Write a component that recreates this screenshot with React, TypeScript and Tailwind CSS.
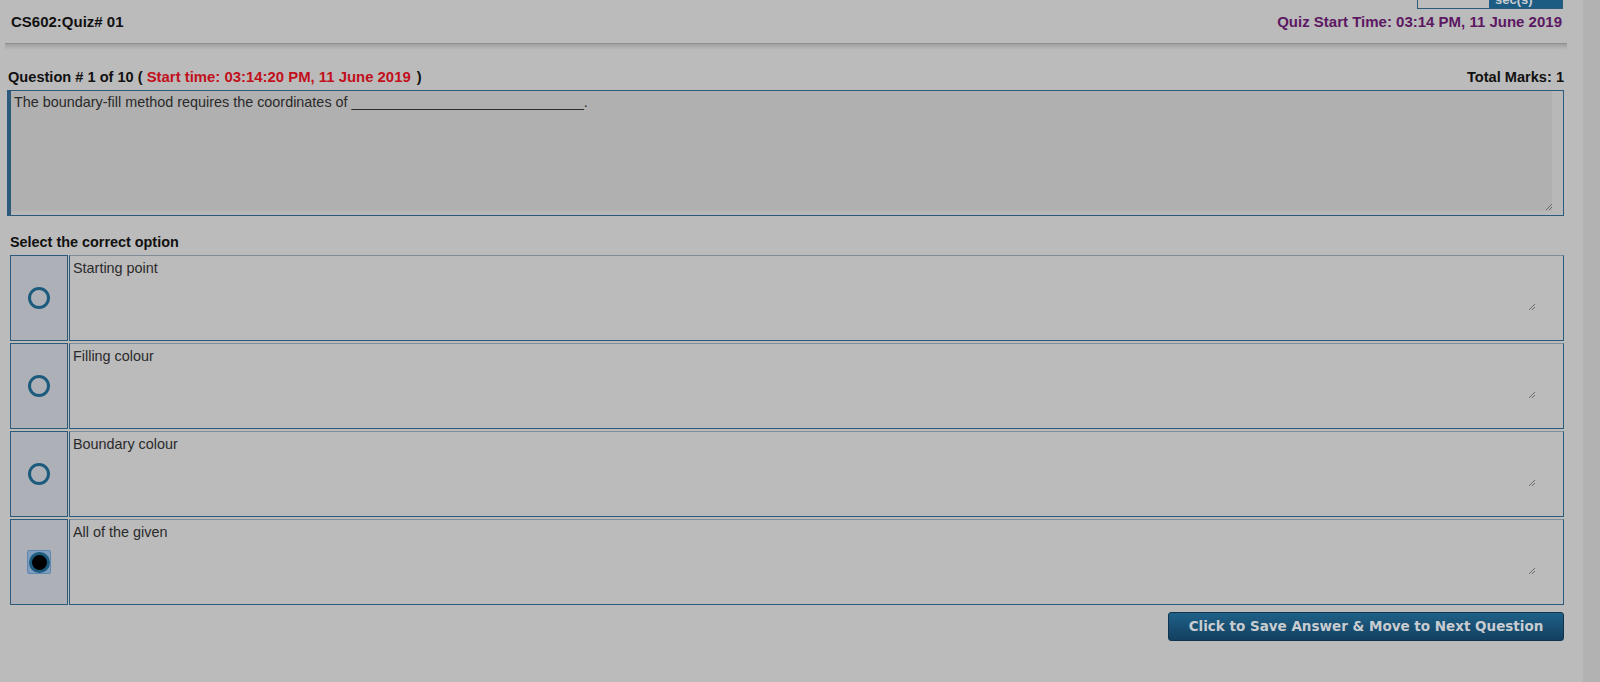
import React from "react"

const options = [
  { text: "Starting point", checked: false },
  { text: "Filling colour", checked: false },
  { text: "Boundary colour", checked: false },
  { text: "All of the given", checked: true },
]

const Grip = () => (
  <svg width="8" height="8" viewBox="0 0 8 8" className="absolute">
    <path d="M7 1 L1 7 M7 4 L4 7" stroke="#6b6b6b" strokeWidth="1" fill="none" />
  </svg>
)

const Radio = ({ checked }: { checked: boolean }) =>
  checked ? (
    <div className="flex h-[24px] w-[24px] items-center justify-center rounded-[2px] border border-[#5d87b3] bg-[#7f9cbd]">
      <div className="h-[21px] w-[21px] rounded-full border-[3px] border-[#1c5a7e] bg-black" />
    </div>
  ) : (
    <div className="h-[22px] w-[22px] rounded-full border-[3px] border-[#1c5a7e]" />
  )

export default function App() {
  return (
    <div className="flex h-[682px] w-full overflow-hidden bg-[#bbbbbb] font-['Liberation_Sans',Arial,sans-serif] text-[14.4px] leading-[17px]">
      <div className="relative w-[1583px]">
        {/* partly scrolled-off timer box */}
        <div className="absolute left-[1417px] top-0 flex h-[9px] w-[146px] overflow-hidden border border-t-0 border-[#2c5a7a]">
          <div className="w-[71px] bg-[#bdbdbd]" />
          <div className="flex-1 bg-[#1d5c82] pl-[6px] text-[13px] font-bold leading-[15px] text-[#c9cdd2] -mt-[8px]">
            sec(s)
          </div>
        </div>

        <div className="flex items-start justify-between pl-[11px] pr-[21px] pt-[13px] text-[15px] font-bold">
          <span className="text-[#111]">CS602:Quiz# 01</span>
          <span className="text-[#5c1862]">Quiz Start Time: 03:14 PM, 11 June 2019</span>
        </div>

        <div className="ml-[5px] mt-[13px] w-[1562px]">
          <div className="h-[1px] bg-[#8f8f8f]" />
          <div className="h-[6px] bg-gradient-to-b from-[#a0a0a0] to-[#bbbbbb]" />
        </div>

        <div className="ml-[7px] w-[1557px]">
          <div className="mt-[19px] flex justify-between text-[14.6px] font-bold text-[#111]">
            <span className="pl-[1px]">
              Question # 1 of 10 ({" "}
              <span className="text-[14.9px] text-[#c2101c]">Start time: 03:14:20 PM, 11 June 2019</span>
              <span className="pl-[2px]"> )</span>
            </span>
            <span>Total Marks: 1</span>
          </div>

          <div className="mt-[4px] flex h-[126px] border border-l-4 border-[#2c5a7a]">
            <div className="relative flex-1 border-b-4 border-r-[11px] border-[#b8b8b8] bg-[#b0b0b0] px-[3px] pt-[3px] text-[#2a2a2a]">
              The boundary-fill method requires the coordinates of _____________________________.
              <div className="absolute bottom-[0px] right-[-1px]">
                <div className="relative h-[8px] w-[8px]">
                  <Grip />
                </div>
              </div>
            </div>
          </div>

          <div className="mt-[18px] pl-[3px] text-[14.4px] font-bold text-[#111]">Select the correct option</div>

          <div className="ml-[3px] mt-[4px] flex flex-col gap-[2px]">
            {options.map((o, i) => (
              <div key={i} className="flex h-[86px] gap-[1px]">
                <div className="flex w-[58px] items-center justify-center border border-[#2c5a7a] bg-[#adb0b7]">
                  <Radio checked={o.checked} />
                </div>
                <div className="relative flex-1 border border-[#2c5a7a] border-t-[#7d8c99] pl-[3px] pt-[4px] text-[#2a2a2a]">
                  {o.text}
                  <div className="absolute right-[27px] top-[47px] h-[8px] w-[8px]">
                    <Grip />
                  </div>
                </div>
              </div>
            ))}
          </div>

          <div className="mt-[7px] flex justify-end">
            <button className="h-[29px] w-[396px] rounded-[3px] border border-[#10344f] bg-gradient-to-b from-[#1f6188] to-[#13405f] font-['DejaVu_Sans',Verdana,sans-serif] text-[13.5px] font-bold text-[#c8ccd1]">
              Click to Save Answer &amp; Move to Next Question
            </button>
          </div>
        </div>
      </div>
      <div className="flex-1 bg-[#b2b2b2]" />
    </div>
  )
}
